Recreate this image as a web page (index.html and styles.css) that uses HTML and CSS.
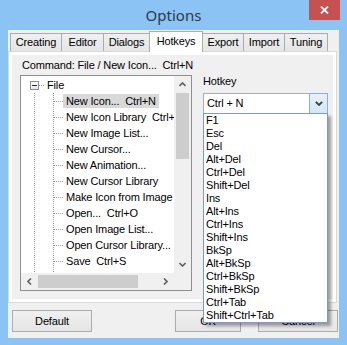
FILE: index.html
```html
<!DOCTYPE html>
<html>
<head>
<meta charset="utf-8">
<link rel="stylesheet" href="styles.css">
</head>
<body>
<div class="window">
  <div class="titlebar">
    <span class="title">Options</span>
    <div class="close">
      <svg width="9" height="8" viewBox="0 0 9 8"><path d="M1 0.5 L8 7.5 M8 0.5 L1 7.5" stroke="#fff" stroke-width="1.8" fill="none"/></svg>
    </div>
  </div>
  <div class="client">
    <div class="tabs">
      <div class="tab t-creating">Creating</div>
      <div class="tab t-editor">Editor</div>
      <div class="tab t-dialogs">Dialogs</div>
      <div class="tab t-hotkeys active">Hotkeys</div>
      <div class="tab t-export">Export</div>
      <div class="tab t-import">Import</div>
      <div class="tab t-tuning">Tuning</div>
    </div>
    <div class="panel">
      <div class="page">
        <div class="command">Command: File / New Icon...  Ctrl+N</div>
        <div class="columns">
          <div class="tree">
            <div class="view">
              <div class="node root"><span class="expander"><span class="minus"></span></span><span class="hline short"></span><span class="label">File</span></div>
              <div class="children">
                <div class="node"><span class="hline"></span><span class="label sel">New Icon...  Ctrl+N</span></div>
                <div class="node"><span class="hline"></span><span class="label">New Icon Library  Ctrl+L</span></div>
                <div class="node"><span class="hline"></span><span class="label">New Image List...</span></div>
                <div class="node"><span class="hline"></span><span class="label">New Cursor...</span></div>
                <div class="node"><span class="hline"></span><span class="label">New Animation...</span></div>
                <div class="node"><span class="hline"></span><span class="label">New Cursor Library</span></div>
                <div class="node"><span class="hline"></span><span class="label">Make Icon from Image List...</span></div>
                <div class="node"><span class="hline"></span><span class="label">Open...  Ctrl+O</span></div>
                <div class="node"><span class="hline"></span><span class="label">Open Image List...</span></div>
                <div class="node"><span class="hline"></span><span class="label">Open Cursor Library...</span></div>
                <div class="node"><span class="hline"></span><span class="label">Save  Ctrl+S</span></div>
                <div class="node"><span class="hline"></span></div>
              </div>
            </div>
            <div class="vscroll">
              <div class="sb-btn"><svg width="7" height="5" viewBox="0 0 7 5"><path d="M0.5 4 L3.5 1 L6.5 4" stroke="#606060" stroke-width="1.6" fill="none"/></svg></div>
              <div class="vthumb"></div>
              <div class="sb-fill"></div>
              <div class="sb-btn"><svg width="7" height="5" viewBox="0 0 7 5"><path d="M0.5 1 L3.5 4 L6.5 1" stroke="#606060" stroke-width="1.6" fill="none"/></svg></div>
            </div>
            <div class="hscroll">
              <div class="sb-btn h"><svg width="5" height="7" viewBox="0 0 5 7"><path d="M4 0.5 L1 3.5 L4 6.5" stroke="#606060" stroke-width="1.6" fill="none"/></svg></div>
              <div class="hthumb"></div>
              <div class="sb-fill"></div>
              <div class="sb-btn h"><svg width="5" height="7" viewBox="0 0 5 7"><path d="M1 0.5 L4 3.5 L1 6.5" stroke="#606060" stroke-width="1.6" fill="none"/></svg></div>
            </div>
            <div class="corner"></div>
          </div>
          <div class="right">
            <div class="hk-label">Hotkey</div>
            <div class="combo">
              <div class="combo-text">Ctrl + N</div>
              <div class="combo-btn"><svg width="8" height="5" viewBox="0 0 8 5"><path d="M0.8 0.8 L4 4 L7.2 0.8" stroke="#404040" stroke-width="1.8" fill="none"/></svg></div>
              <ul class="droplist">
                <li>F1</li>
                <li>Esc</li>
                <li>Del</li>
                <li>Alt+Del</li>
                <li>Ctrl+Del</li>
                <li>Shift+Del</li>
                <li>Ins</li>
                <li>Alt+Ins</li>
                <li>Ctrl+Ins</li>
                <li>Shift+Ins</li>
                <li>BkSp</li>
                <li>Alt+BkSp</li>
                <li>Ctrl+BkSp</li>
                <li>Shift+BkSp</li>
                <li>Ctrl+Tab</li>
                <li>Shift+Ctrl+Tab</li>
              </ul>
            </div>
          </div>
        </div>
      </div>
    </div>
    <div class="buttons">
      <div class="btn b-default">Default</div>
      <div class="btn b-ok">OK</div>
      <div class="btn b-cancel">Cancel</div>
    </div>
  </div>
</div>
</body>
</html>
```

FILE: styles.css
```css
html, body {
  margin: 0;
  padding: 0;
}

body {
  width: 347px;
  height: 345px;
  overflow: hidden;
  background: #8bc3f4;
  font-family: "Liberation Sans", Arial, sans-serif;
  font-size: 11px;
  letter-spacing: -0.15px;
  color: #000;
}

.window {
  display: flex;
  flex-direction: column;
  height: 345px;
}

.titlebar {
  height: 30px;
  position: relative;
  display: flex;
  justify-content: center;
  align-items: center;
}

.title {
  font-family: "Noto Sans", "Open Sans", sans-serif;
  font-size: 15px;
  letter-spacing: 0;
  color: #2d3a4a;
  line-height: 20px;
}

.close {
  position: absolute;
  top: 0;
  right: 7px;
  width: 31px;
  height: 20px;
  background: #c75050;
  display: flex;
  justify-content: center;
  align-items: center;
}

.client {
  margin: 0 8px;
  height: 308px;
  background: #f0f0f0;
  display: flex;
  flex-direction: column;
}

/* tabs */
.tabs {
  display: flex;
  align-items: flex-end;
  height: 21px;
  padding-left: 2px;
  position: relative;
  z-index: 1;
}

.tab {
  box-sizing: border-box;
  height: 18px;
  border: 1px solid #acacac;
  border-bottom: none;
  margin-left: -1px;
  background: linear-gradient(#f0f0f0, #e5e5e5);
  display: flex;
  justify-content: center;
  align-items: center;
  line-height: 13px;
}

.tab:first-child { margin-left: 0; }

.tab.active {
  height: 21px;
  margin-bottom: -1px;
  background: #fff;
  padding-bottom: 2px;
  position: relative;
}

.t-creating { width: 52px; }
.t-editor { width: 43px; }
.t-dialogs { width: 47px; }
.t-hotkeys { width: 54px; }
.t-export { width: 42px; }
.t-import { width: 42px; }
.t-tuning { width: 44px; }

/* panel */
.panel {
  box-sizing: border-box;
  width: 329px;
  height: 252px;
  border: 1px solid #d9d9d9;
  background: #fff;
  padding: 3px;
}

.page {
  height: 100%;
  background: #f0f0f0;
  padding-left: 8px;
  box-sizing: border-box;
}

.command {
  padding: 4px 0 0 2px;
  height: 13px;
  line-height: 13px;
  white-space: pre;
}

.columns {
  display: flex;
  margin-top: 3px;
  gap: 11px;
}

/* tree */
.tree {
  box-sizing: border-box;
  width: 172px;
  height: 216px;
  border: 1px solid #8e8f8f;
  background: #fff;
  display: grid;
  grid-template-columns: 1fr 17px;
  grid-template-rows: 1fr 17px;
}

.view {
  overflow: hidden;
  padding-top: 1px;
}

.node {
  height: 16px;
  display: flex;
  align-items: center;
  white-space: pre;
  line-height: 14px;
}

.root { padding-left: 9px; }

.expander {
  box-sizing: border-box;
  width: 9px;
  height: 9px;
  border: 1px solid #919191;
  background: linear-gradient(#fff, #e6e6e6);
  display: flex;
  justify-content: center;
  align-items: center;
}

.minus {
  width: 5px;
  height: 1px;
  background: #1b2e6b;
}

.hline {
  flex: none;
  width: 9px;
  height: 1px;
  background: repeating-linear-gradient(to right, #a0a0a0 0 1px, transparent 1px 2px);
}

.hline.short { width: 6px; }

.label {
  padding: 0 3px;
  height: 14px;
}

.root .label { padding-left: 2px; }

.label.sel { background: #d9d9d9; }

.children {
  background-image:
    repeating-linear-gradient(to bottom, #a0a0a0 0 1px, transparent 1px 2px),
    repeating-linear-gradient(to bottom, #a0a0a0 0 1px, transparent 1px 2px);
  background-size: 1px 100%, 1px 100%;
  background-position: 13px 0, 32px 0;
  background-repeat: no-repeat;
}

.children .node { padding-left: 33px; }

/* scrollbars */
.vscroll {
  background: #f0f0f0;
  display: flex;
  flex-direction: column;
}

.sb-btn {
  flex: none;
  height: 17px;
  display: flex;
  justify-content: center;
  align-items: center;
}

.sb-btn.h {
  width: 17px;
  height: auto;
}

.sb-fill { flex: 1; }

.vthumb {
  height: 66px;
  margin: 0 2px;
  background: #cdcdcd;
}

.hscroll {
  background: #f0f0f0;
  display: flex;
}

.hthumb {
  width: 100px;
  margin: 2px 0;
  background: #cdcdcd;
}

.corner { background: #f0f0f0; }

/* right column */
.right {
  width: 125px;
}

.hk-label {
  height: 13px;
  line-height: 13px;
  margin-bottom: 5px;
}

.combo {
  position: relative;
  display: flex;
  height: 21px;
}

.combo-text {
  flex: 1;
  box-sizing: border-box;
  border: 1px solid #abadb3;
  border-right: none;
  background: #fff;
  padding: 3px 0 0 3px;
  line-height: 13px;
}

.combo-btn {
  box-sizing: border-box;
  width: 19px;
  border: 1px solid #7eb4ea;
  background: linear-gradient(#e5f1fb, #d5e7f8);
  display: flex;
  justify-content: center;
  align-items: center;
}

.droplist {
  position: absolute;
  left: 0;
  top: 20px;
  width: 125px;
  box-sizing: border-box;
  margin: 0;
  padding: 0;
  list-style: none;
  background: #fff;
  border: 1px solid #7a9ccc;
  box-shadow: 3px 3px 3px rgba(0, 0, 0, 0.35);
  z-index: 5;
}

.droplist li {
  height: 13px;
  line-height: 13px;
  padding-left: 2px;
}

/* buttons */
.buttons {
  display: flex;
  margin-top: 7px;
  padding-left: 4px;
}

.btn {
  box-sizing: border-box;
  height: 22px;
  border: 1px solid #acacac;
  background: linear-gradient(#f0f0f0, #e5e5e5);
  display: flex;
  justify-content: center;
  align-items: center;
}

.b-default { width: 80px; margin-right: auto; }
.b-ok { width: 66px; margin-right: 17px; }
.b-cancel { width: 80px; margin-right: 1px; }
```
